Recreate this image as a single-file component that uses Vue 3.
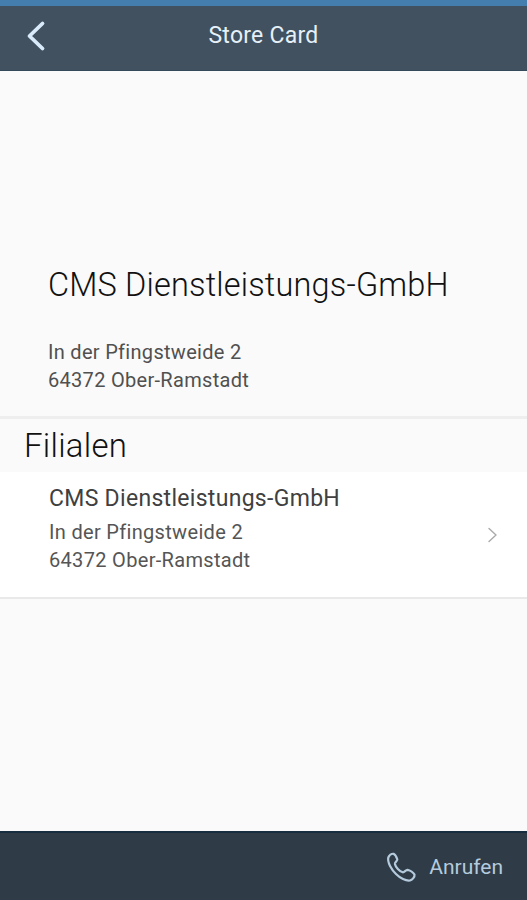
<template>
  <div class="page">
    <header class="header">
      <button class="back" aria-label="Zurück">
        <svg width="22" height="32" viewBox="0 0 22 32">
          <path d="M18.500 3.500 L5.500 16 L18.500 28.500" />
        </svg>
      </button>
      <h1>{{ title }}</h1>
    </header>

    <main class="content">
      <section class="store">
        <h2>{{ store.name }}</h2>
        <p>{{ store.street }}</p>
        <p>{{ store.city }}</p>
      </section>

      <h3 class="section-title">Filialen</h3>

      <div v-for="branch in branches" :key="branch.name" class="branch">
        <div class="branch-text">
          <h4>{{ branch.name }}</h4>
          <p>{{ branch.street }}</p>
          <p>{{ branch.city }}</p>
        </div>
        <svg class="arrow" width="12" height="18" viewBox="0 0 12 18">
          <path d="M2 2.500 L9 9 L2 15.500" />
        </svg>
      </div>
    </main>

    <footer class="footer">
      <button class="call">
        <svg width="32" height="32" viewBox="0 0 32 32">
          <path
            d="M3.300 6.500 C4.200 4.300 6.500 2.500 8.500 2.800 C10 3.500 11.500 6.200 12.300 8.300 C12.500 9.800 9.700 11.300 9.900 13 C10.500 16 14.500 20.300 17.800 21.300 C19.500 21.500 20.500 18.900 22.500 18.800 C25 19.300 28.500 21.600 29.500 23.500 C29.900 26 27.500 28.700 25 29.500 C21 30.200 15 27 11 23 C6.500 18.500 2.200 11.500 3.300 6.500 Z"
          />
        </svg>
        <span>Anrufen</span>
      </button>
    </footer>
  </div>
</template>

<script setup>
import { ref } from 'vue'

const title = ref('Store Card')

const store = ref({
  name: 'CMS Dienstleistungs-GmbH',
  street: 'In der Pfingstweide 2',
  city: '64372 Ober-Ramstadt'
})

const branches = ref([
  {
    name: 'CMS Dienstleistungs-GmbH',
    street: 'In der Pfingstweide 2',
    city: '64372 Ober-Ramstadt'
  }
])
</script>

<style>
body {
  margin: 0;
  background: #fafafa;
}
</style>

<style scoped>
.page {
  display: flex;
  flex-direction: column;
  height: 900px;
  overflow: hidden;
  background: #fafafa;
  color: #111;
  font-family: Roboto, "Liberation Sans", sans-serif;
}

h1,
h2,
h3,
h4,
p {
  margin: 0;
  font-weight: 400;
  white-space: nowrap;
}

button {
  padding: 0;
  border: none;
  background: none;
  font-family: inherit;
}

svg {
  display: block;
  fill: none;
  stroke-linecap: round;
  stroke-linejoin: round;
}

.header {
  display: grid;
  grid-template-columns: 80px 1fr 80px;
  align-items: center;
  box-sizing: border-box;
  height: 71px;
  border-top: 6px solid #437eae;
  border-bottom: 1px solid #34495a;
  background: #415160;
}

.back {
  padding: 0 0 4px 24px;
}

.back svg {
  stroke: #d9ebfb;
  stroke-width: 3.8;
}

.header h1 {
  padding-bottom: 4px;
  text-align: center;
  font-size: 23px;
  line-height: 28px;
  letter-spacing: 0.25px;
  color: #e6f0f8;
}

.content {
  flex: 1;
}

.store {
  box-sizing: border-box;
  height: 348px;
  padding: 194px 48px 0;
  border-bottom: 3px solid #eee;
}

.store h2 {
  margin-bottom: 34px;
  font-size: 32.500px;
  font-weight: 300;
  line-height: 40px;
  letter-spacing: 0.17px;
}

.store p {
  font-size: 20px;
  line-height: 27.500px;
  letter-spacing: 0.3px;
  color: #505050;
}

.section-title {
  height: 53px;
  padding-left: 24px;
  font-size: 33px;
  font-weight: 300;
  line-height: 54px;
  letter-spacing: 0.25px;
}

.branch {
  display: flex;
  align-items: center;
  justify-content: space-between;
  box-sizing: border-box;
  height: 127px;
  padding: 0 28px 0 49px;
  border-bottom: 2px solid #e9e9e9;
  background: #fff;
}

.branch-text {
  padding-bottom: 11px;
}

.branch h4 {
  margin-bottom: 4px;
  font-size: 23px;
  line-height: 30px;
  letter-spacing: 0.3px;
  color: #404040;
}

.branch p {
  font-size: 20px;
  line-height: 28px;
  letter-spacing: 0.32px;
  color: #555;
}

.arrow {
  stroke: #aaa;
  stroke-width: 1.4;
}

.footer {
  display: flex;
  justify-content: flex-end;
  box-sizing: border-box;
  height: 69px;
  padding-right: 24px;
  border-top: 2px solid #182e40;
  background: #2f3c47;
}

.call {
  display: flex;
  align-items: center;
  gap: 12px;
  font-size: 21px;
  color: #b5cbdd;
}

.call svg {
  stroke: #b5cbdd;
  stroke-width: 2.2;
}
</style>
